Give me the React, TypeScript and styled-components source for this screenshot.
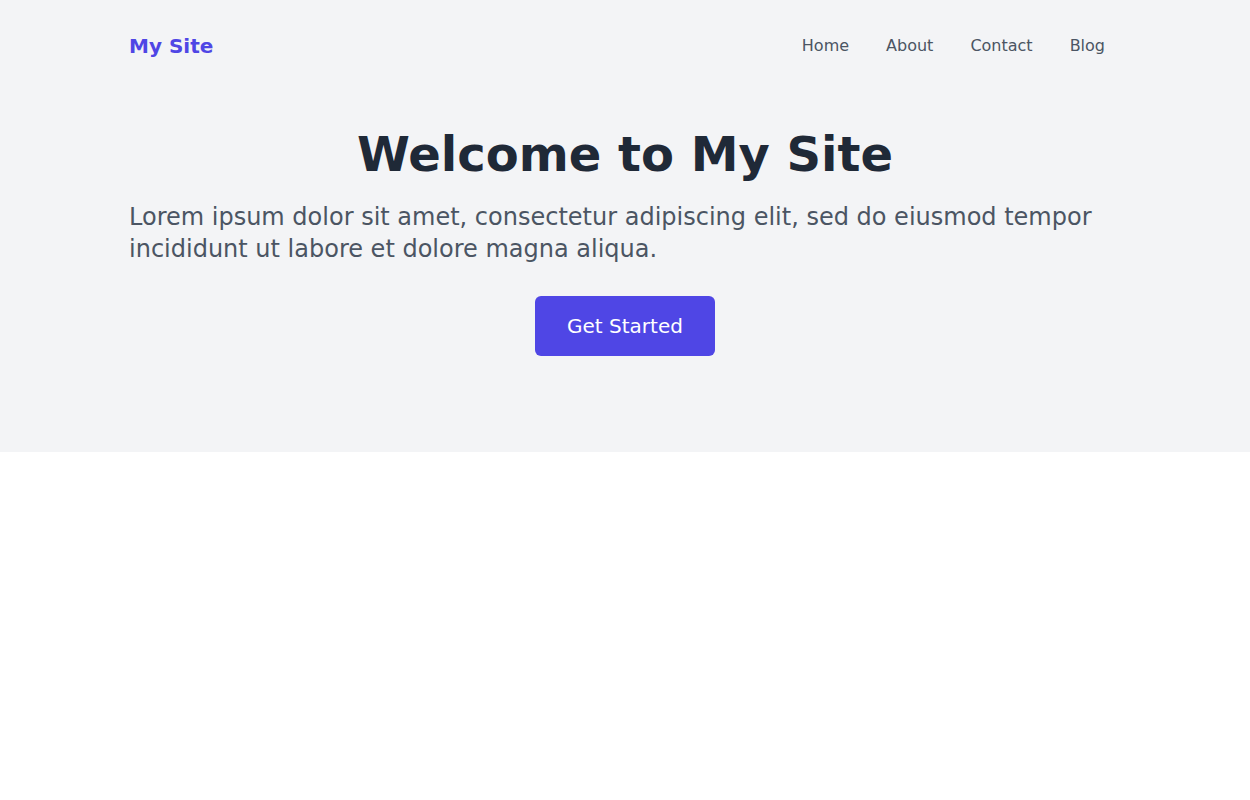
import React from 'react';
import styled, { createGlobalStyle } from 'styled-components';

const GlobalStyle = createGlobalStyle`
  body {
    margin: 0;
    background: #fff;
    font-family: 'DejaVu Sans', sans-serif;
  }
`;

const Header = styled.header`
  background-color: #f3f4f6;
`;

const Container = styled.div`
  max-width: 1024px;
  margin: 0 auto;
  padding: 0 16px;
  box-sizing: border-box;
`;

const Nav = styled.nav`
  display: flex;
  justify-content: space-between;
  align-items: center;
  padding: 32px 0;
`;

const Brand = styled.a`
  color: #4f46e5;
  font-size: 20px;
  line-height: 28px;
  font-weight: 700;
  text-decoration: none;
`;

const NavLinks = styled.ul`
  display: flex;
  gap: 5px;
  list-style: none;
  margin: 0;
  padding: 0;
`;

const NavLink = styled.a`
  display: block;
  padding: 0 16px;
  color: #4b5563;
  font-size: 16px;
  line-height: 24px;
  text-decoration: none;
`;

const Hero = styled.section`
  padding: 38px 0 96px;
  display: flex;
  flex-direction: column;
`;

const Heading = styled.h1`
  margin: 0 0 23px;
  text-align: center;
  color: #1f2937;
  font-size: 48px;
  line-height: 48px;
  font-weight: 700;
`;

const Lead = styled.p`
  margin: 0 0 31px;
  color: #4b5563;
  font-size: 24px;
  line-height: 32px;
`;

const Button = styled.a`
  align-self: center;
  background-color: #4f46e5;
  color: #fff;
  font-size: 20px;
  line-height: 28px;
  padding: 16px 32px;
  border-radius: 6px;
  text-decoration: none;
`;

const links = ['Home', 'About', 'Contact', 'Blog'];

function App() {
  return (
    <>
      <GlobalStyle />
      <Header>
        <Container>
          {/* Top navigation */}
          <Nav>
            <Brand href="#">My Site</Brand>
            <NavLinks>
              {links.map((l) => (
                <li key={l}>
                  <NavLink href="#">{l}</NavLink>
                </li>
              ))}
            </NavLinks>
          </Nav>

          {/* Hero */}
          <Hero>
            <Heading>Welcome to My Site</Heading>
            <Lead>
              Lorem ipsum dolor sit amet, consectetur adipiscing elit, sed do eiusmod tempor
              incididunt ut labore et dolore magna aliqua.
            </Lead>
            <Button href="#">Get Started</Button>
          </Hero>
        </Container>
      </Header>
    </>
  );
}

export default App;
